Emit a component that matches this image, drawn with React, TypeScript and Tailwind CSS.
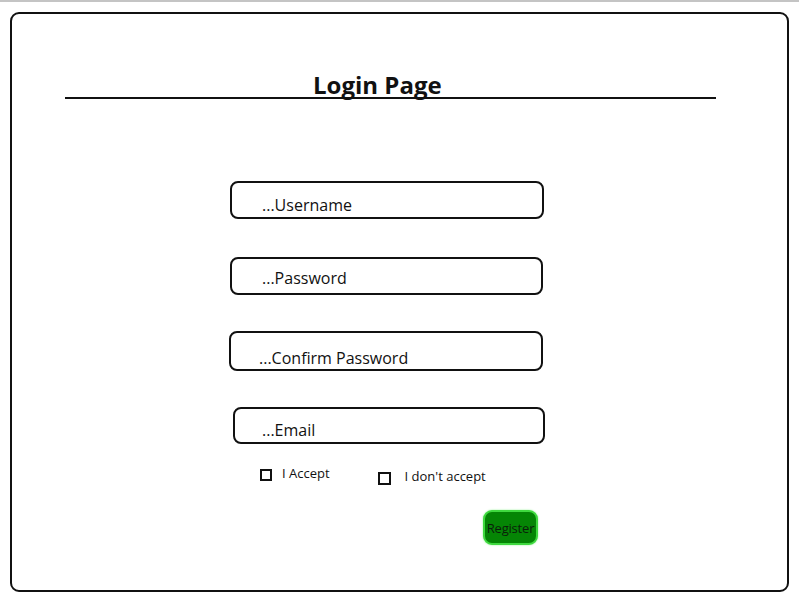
import React from 'react';

interface Field {
  label: string;
  box: string;
  text: string;
}

// hand-drawn mockup: boxes are not quite aligned, so each one keeps its own offsets
const fields: Field[] = [
  { label: '...Username', box: 'mt-[82px] ml-[218px] w-[314px] h-[38px]', text: 'pt-[14px] pl-[30px]' },
  { label: '...Password', box: 'mt-[38px] ml-[218px] w-[313px] h-[38px]', text: 'pt-[11px] pl-[30px]' },
  { label: '...Confirm Password', box: 'mt-[36px] ml-[217px] w-[314px] h-[40px]', text: 'pt-[17px] pl-[28px]' },
  { label: '...Email', box: 'mt-[36px] ml-[221px] w-[312px] h-[37px]', text: 'pt-[13px] pl-[27px]' },
];

export default function App() {
  return (
    <div
      className="w-[799px] h-[601px] bg-white border-t-2 border-[#c4c4c4] overflow-hidden text-[#111]"
      style={{ fontFamily: '"Open Sans", "Liberation Sans", sans-serif' }}
    >
      <div className="ml-[10px] mt-[10px] w-[779px] h-[580px] border-2 border-[#111] rounded-[9px] flex flex-col">
        {/* Title with underline */}
        <div className="mt-[59px] ml-[53px] w-[651px] border-b-2 border-[#111]">
          <h1 className="pl-[248px] text-[24px] font-bold leading-none">Login Page</h1>
        </div>

        {/* Inputs */}
        {fields.map((f) => (
          <div key={f.label} className={`${f.box} border-2 border-[#111] rounded-[8px]`}>
            <div className={`${f.text} text-[16px] leading-none`}>{f.label}</div>
          </div>
        ))}

        {/* Checkboxes */}
        <div className="mt-[22px] ml-[248px] flex items-start">
          <span className="mt-[3px] w-[12px] h-[12px] border-2 border-[#111]" />
          <span className="ml-[10px] mt-[1px] text-[13px] leading-none">I Accept</span>
          <span className="ml-[48px] mt-[6px] w-[13px] h-[13px] border-2 border-[#111]" />
          <span className="ml-[14px] mt-[4px] text-[13px] leading-none">I don't accept</span>
        </div>

        {/* Register */}
        <div className="mt-[25px] ml-[471px]">
          <button className="w-[55px] h-[35px] flex items-center justify-center pt-[2px] bg-[#058505] border-2 border-[#3fd93f] rounded-[9px] shadow-[0_0_2px_#8fef8f] text-[13px] tracking-[-0.2px] text-[#0a1f0a] leading-none">
            Register
          </button>
        </div>
      </div>
    </div>
  );
}
